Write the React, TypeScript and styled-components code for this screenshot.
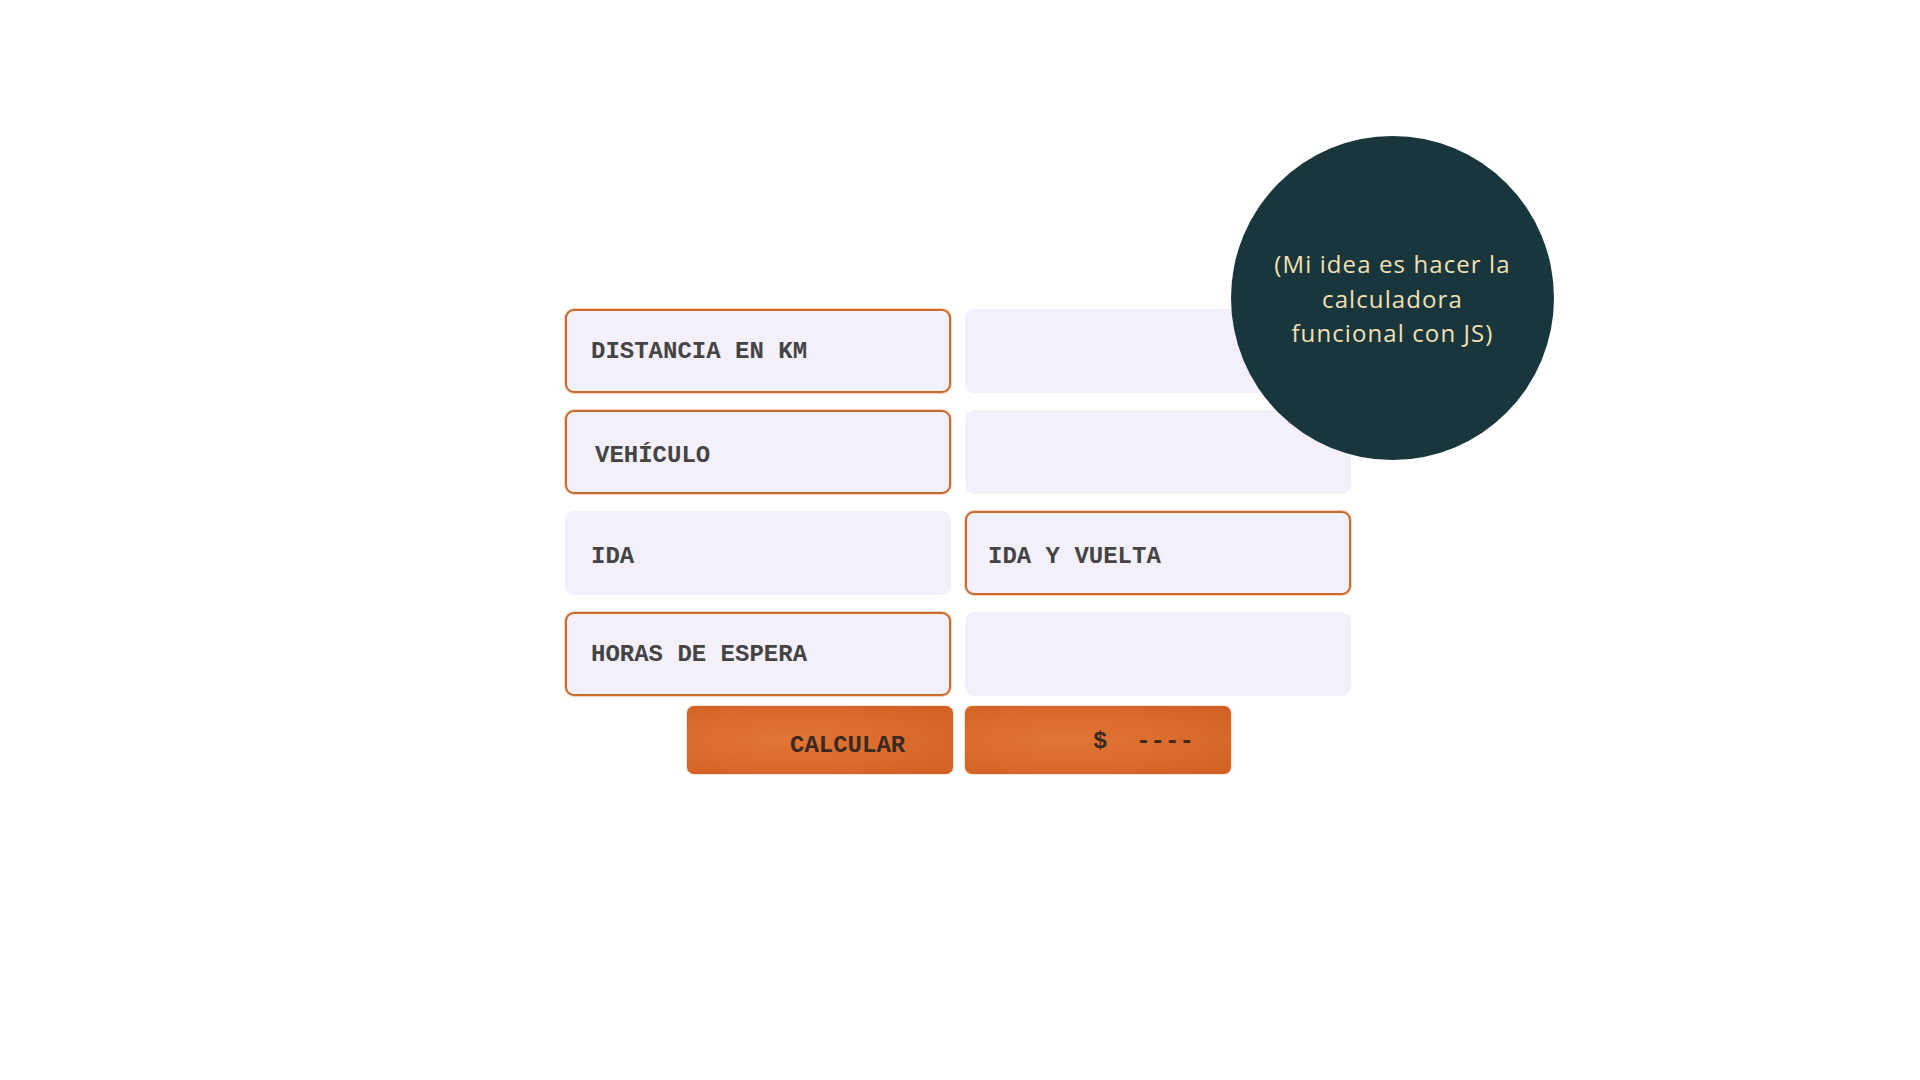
import React from "react";
import styled, { createGlobalStyle } from "styled-components";

const Global = createGlobalStyle`
  html, body { margin: 0; padding: 0; background: #ffffff; }
  body { width: 1920px; height: 1080px; overflow: hidden; }
`;

const Page = styled.div`
  display: flex;
  justify-content: flex-start;
  padding-top: 309px;
  padding-left: 565px;
  width: 1920px;
  height: 1080px;
  box-sizing: border-box;
`;

const Calculator = styled.div`
  position: relative;
  display: grid;
  grid-template-columns: 386px 386px;
  grid-auto-rows: 84px;
  column-gap: 14px;
  row-gap: 17px;
  align-content: start;
  height: fit-content;
`;

const Field = styled.div<{ $outlined?: boolean; $indent?: number; $dy?: number }>`
  box-sizing: border-box;
  display: flex;
  align-items: center;
  padding-left: ${(p) => p.$indent ?? 24}px;
  padding-top: ${(p) => p.$dy ?? 0}px;
  border-radius: 9px;
  background: #f3f0fa;
  border: 2px solid ${(p) => (p.$outlined ? "#c96a2e" : "transparent")};
  box-shadow: ${(p) => (p.$outlined ? "0 0 1px 1px rgba(210,120,60,0.35)" : "none")};
  font-family: "Liberation Mono", "DejaVu Sans Mono", monospace;
  font-weight: bold;
  font-size: 24px;
  color: #444444;
  white-space: pre;
`;

const ButtonRow = styled.div`
  grid-column: 1 / span 2;
  display: grid;
  grid-template-columns: 388px 386px;
  column-gap: 12px;
  height: 68px;
  margin-top: -7px;
`;

const OrangeButton = styled.div<{ $align: "start" | "end"; $pad: number; $shift?: number }>`
  justify-self: ${(p) => p.$align};
  box-sizing: border-box;
  width: 266px;
  height: 68px;
  border-radius: 7px;
  background: radial-gradient(ellipse at 40% 50%, #e07636 0%, #d9692a 60%, #cf6022 100%);
  box-shadow: 0 0 2px rgba(190, 90, 30, 0.6);
  display: flex;
  align-items: center;
  padding-left: ${(p) => p.$pad}px;
  padding-top: ${(p) => p.$shift ?? 0}px;
  font-family: "Liberation Mono", "DejaVu Sans Mono", monospace;
  font-weight: bold;
  font-size: 24px;
  color: #3a2a20;
  white-space: pre;
`;

const Bubble = styled.div`
  position: absolute;
  left: 666px;
  top: -173px;
  width: 323px;
  height: 324px;
  border-radius: 50%;
  background: #19363c;
  display: flex;
  align-items: center;
  justify-content: center;
  text-align: center;
  padding-top: 2px;
  box-sizing: border-box;
`;

const BubbleText = styled.p`
  margin: 0;
  font-family: "Open Sans", "Noto Sans", sans-serif;
  font-weight: 500;
  font-size: 24px;
  line-height: 34.5px;
  letter-spacing: 1.1px;
  color: #f3e0b2;
`;

export default function App() {
  return (
    <>
      <Global />
      <Page>
        <Calculator>
          <Field $outlined>DISTANCIA EN KM</Field>
          <Field />
          <Field $outlined $indent={28} $dy={6}>VEHÍCULO</Field>
          <Field />
          <Field $dy={6}>IDA</Field>
          <Field $outlined $indent={21} $dy={6}>IDA Y VUELTA</Field>
          <Field $outlined>HORAS DE ESPERA</Field>
          <Field />
          <ButtonRow>
            <OrangeButton $align="end" $pad={103} $shift={10}>CALCULAR</OrangeButton>
            <OrangeButton $align="start" $pad={128} $shift={2}>{"$  ----"}</OrangeButton>
          </ButtonRow>
          <Bubble>
            <BubbleText>
              (Mi idea es hacer la
              <br />
              calculadora
              <br />
              funcional con JS)
            </BubbleText>
          </Bubble>
        </Calculator>
      </Page>
    </>
  );
}
